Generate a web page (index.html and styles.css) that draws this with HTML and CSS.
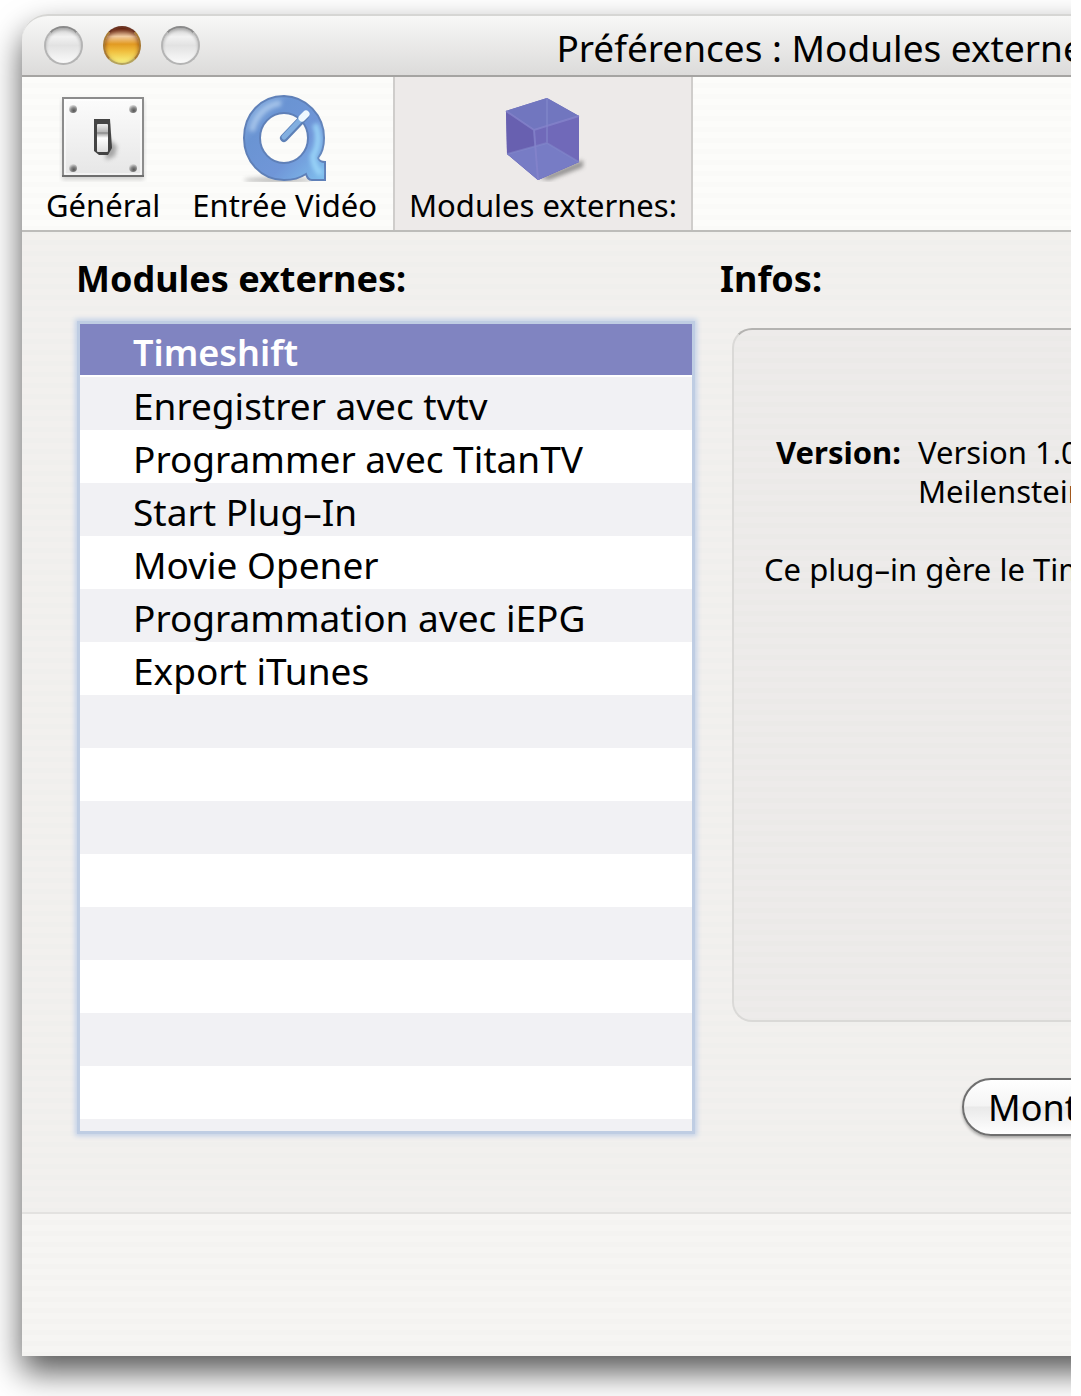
FILE: index.html
```html
<!DOCTYPE html>
<html lang="fr">
<head>
    <meta charset="UTF-8">
    <meta name="viewport" content="width=device-width, initial-scale=1.0">
    <title>Préférences : Modules externes</title>
    <link rel="stylesheet" href="styles.css">
</head>
<body>
    <div class="stage">
        <main class="window">
            <header class="titlebar">
                <div class="lights">
                    <button class="light" aria-label="Fermer"></button>
                    <button class="light amber" aria-label="Réduire"></button>
                    <button class="light" aria-label="Agrandir"></button>
                </div>
                <h1>Préférences : Modules externes</h1>
            </header>

            <nav class="toolbar">
                <button class="tool">
                    <svg width="88" height="88" viewBox="0 0 88 88" aria-hidden="true">
                        <defs>
                            <linearGradient id="plate" x1="0" y1="0" x2="0" y2="1">
                                <stop offset="0" stop-color="#fcfcfc"/>
                                <stop offset="1" stop-color="#e6e6e6"/>
                            </linearGradient>
                            <linearGradient id="lever" x1="0" y1="0" x2="0" y2="1">
                                <stop offset="0" stop-color="#eee"/>
                                <stop offset=".35" stop-color="#aaa"/>
                                <stop offset=".5" stop-color="#fff"/>
                                <stop offset="1" stop-color="#ddd"/>
                            </linearGradient>
                            <radialGradient id="screw" cx=".6" cy=".7" r=".7">
                                <stop offset="0" stop-color="#555"/>
                                <stop offset=".5" stop-color="#888"/>
                                <stop offset="1" stop-color="#ddd"/>
                            </radialGradient>
                            <filter id="soft" x="-50%" y="-50%" width="200%" height="200%">
                                <feGaussianBlur stdDeviation="2"/>
                            </filter>
                        </defs>
                        <rect x="3" y="6" width="82" height="80" fill="#999" opacity=".4" filter="url(#soft)"/>
                        <rect x="4" y="4" width="80" height="78" fill="url(#plate)" stroke="#8c8c8c" stroke-width="2"/>
                        <path d="M3 82H85" stroke="#6e6e6e" stroke-width="2"/>
                        <rect x="6" y="6" width="76" height="74" fill="none" stroke="#fff"/>
                        <circle cx="14" cy="15" r="4" fill="url(#screw)"/>
                        <circle cx="74" cy="15" r="4" fill="url(#screw)"/>
                        <circle cx="14" cy="74" r="4" fill="url(#screw)"/>
                        <circle cx="74" cy="74" r="4" fill="url(#screw)"/>
                        <path d="M46 42L58 52L56 62L47 66Z" fill="#777" opacity=".6" filter="url(#soft)"/>
                        <path d="M35 25H51L53 54L49 61H40L35 57Z" fill="#444"/>
                        <rect x="38" y="30" width="11" height="28" rx="1" fill="url(#lever)"/>
                        <path d="M38 39H49" stroke="#999" stroke-width="2"/>
                    </svg>
                    <span>Général</span>
                </button>
                <button class="tool">
                    <svg width="88" height="88" viewBox="0 0 88 88" aria-hidden="true">
                        <defs>
                            <linearGradient id="ring" x1="0" y1="0" x2="1" y2="1">
                                <stop offset="0" stop-color="#8fb5e2"/>
                                <stop offset=".3" stop-color="#6a94d3"/>
                                <stop offset=".65" stop-color="#7096d8"/>
                                <stop offset="1" stop-color="#7fc0ee"/>
                            </linearGradient>
                        </defs>
                        <ellipse cx="37" cy="86" rx="34" ry="3" fill="#777" opacity=".45" filter="url(#soft)"/>
                        <path fill-rule="evenodd" fill="url(#ring)" stroke="#5f80b8" stroke-width="2" d="M43 2A41 42 0 0 1 83 44C83 53 81 59 77 64C78 67 80 68 84 68V86H71C67 86 66 83 65 80C59 84 51 86 43 86C20 86 3 67 3 44C3 20 20 2 43 2ZM43 19A24 25 0 1 0 43 69A24 25 0 1 0 43 19Z"/>
                        <g filter="url(#soft)">
                            <path d="M11 37A33 34 0 0 1 40 9" fill="none" stroke="#b2cdef" stroke-width="6" opacity=".8"/>
                            <path d="M74 30Q81 47 72 62Q72 72 80 80" fill="none" stroke="#9bd7fa" stroke-width="6" opacity=".9"/>
                        </g>
                        <path d="M43 44L64 22" stroke="#5d80b7" stroke-width="8" stroke-linecap="round"/>
                        <path d="M43 43L64 21" stroke="#82afe0" stroke-width="5" stroke-linecap="round"/>
                        <path d="M61 24L65 20" stroke="#eef8ff" stroke-width="7" stroke-linecap="round"/>
                    </svg>
                    <span>Entrée Vidéo</span>
                </button>
                <button class="tool selected" aria-pressed="true">
                    <svg width="88" height="88" viewBox="0 0 88 88" aria-hidden="true">
                        <path d="M40 84L84 66V73L50 86Z" fill="#555" opacity=".6" filter="url(#soft)"/>
                        <path d="M7 17L48 4L80 22V68L39 86L8 60Z" fill="#6c69b8"/>
                        <path d="M7 17L48 4L80 22L35 36Z" fill="#7176bf"/>
                        <path d="M7 17L35 36L39 86L8 60Z" fill="#6860b0"/>
                        <path d="M35 36L80 22V68L39 86Z" fill="#7069b9"/>
                        <path d="M8 60L48 49L80 68L39 86Z" fill="#777cc5"/>
                        <path d="M48 4V49L80 68M48 49L8 60" fill="none" stroke="#858bce" stroke-width="2" opacity=".5"/>
                        <path d="M7 17L35 36L80 22M35 36L39 86" fill="none" stroke="#8583cb" stroke-width="2" opacity=".8"/>
                    </svg>
                    <span>Modules externes:</span>
                </button>
            </nav>

            <div class="content">
                <section class="modules">
                    <h2 id="modulesTitle">Modules externes:</h2>
                    <ul class="module-list" role="listbox" aria-labelledby="modulesTitle" tabindex="0">
                        <li role="option" aria-selected="true">Timeshift</li>
                        <li role="option">Enregistrer avec tvtv</li>
                        <li role="option">Programmer avec TitanTV</li>
                        <li role="option">Start Plug–In</li>
                        <li role="option">Movie Opener</li>
                        <li role="option">Programmation avec iEPG</li>
                        <li role="option">Export iTunes</li>
                    </ul>
                </section>

                <section class="infos">
                    <h2>Infos:</h2>
                    <div class="info-box">
                        <dl>
                            <dt>Version:</dt>
                            <dd>Version 1.0<br>Meilenstein</dd>
                        </dl>
                        <p>Ce plug–in gère le Timeshift</p>
                    </div>
                    <button class="push">Montrer</button>
                </section>
            </div>

            <footer class="bottom"></footer>
        </main>
    </div>
</body>
</html>
```
FILE: styles.css
```css
* {
    box-sizing: border-box;
}

body {
    margin: 0;
    background: #fff;
    color: #000;
    font-family: "Noto Sans", "Open Sans", sans-serif;
    font-size: 37px;
    line-height: 53px;
}

h1, h2, p, ul, dl, dd {
    margin: 0;
    padding: 0;
}

h1 {
    font-size: 37px;
}

h2 {
    padding-left: 2px;
    font-size: 36px;
}

button {
    font-family: inherit;
    color: inherit;
    padding: 0;
    border: none;
    background: none;
}

/* the window runs past the right edge of the stage */
.stage {
    margin-right: 10px;
    padding: 14px 0 40px 22px;
    overflow: hidden;
}

.window {
    width: 155%;
    border-radius: 26px 26px 0 0;
    background: repeating-linear-gradient(#f2f0ee 0 6px, #f0efed 6px 11px);
    box-shadow: 0 16px 32px rgba(0, 0, 0, 0.66);
}

/* title bar */
.titlebar {
    display: flex;
    align-items: center;
    height: 63px;
    padding: 0 22px;
    border-top: 2px solid #d6d6d4;
    border-bottom: 2px solid #a5a4a2;
    border-radius: 26px 26px 0 0;
    background: linear-gradient(#f8f8f7, #efefee 30%, #dcdbda);
}

.titlebar h1 {
    flex: 1;
    margin-right: 168px;
    padding-top: 4px;
    font-weight: 400;
    text-align: center;
    white-space: nowrap;
}

.lights {
    display: flex;
    gap: 20px;
    width: 156px;
}

.light {
    width: 39px;
    height: 39px;
    border: 2px solid #b4b4b4;
    border-top-color: #8a8a8a;
    border-radius: 50%;
    background: linear-gradient(#d0d0d0, #f2f2f2 25%, #e2e2e2 50%, #fafafa);
    box-shadow: inset 0 2px 3px rgba(0, 0, 0, 0.2);
}

.light.amber {
    border-color: #6b3220 #a87a34 #b5a35c;
    background: linear-gradient(#6e2c18, #f1cba0 24%, #e29a22 46%, #f1c141 68%, #f8f482);
    box-shadow: inset 0 2px 4px rgba(90, 20, 0, 0.6);
}

/* toolbar */
.toolbar {
    display: flex;
    padding-left: 8px;
    height: 155px;
    border-bottom: 2px solid #bdbcba;
    background: repeating-linear-gradient(#fcfcfa 0 6px, #fafaf8 6px 11px);
}

.tool {
    display: flex;
    flex-direction: column;
    align-items: center;
    padding: 17px 14px 0;
    border: solid transparent;
    border-width: 0 2px;
    font-size: 31px;
    line-height: 46px;
    white-space: nowrap;
}

.tool svg {
    display: block;
}

.tool.selected {
    border-color: #cfcdcb;
    background: #edeae9;
}

/* content */
.content {
    display: flex;
    gap: 20px;
    height: 982px;
    padding: 20px 52px 0;
    border-bottom: 2px solid #e3e2e0;
}

.modules {
    flex: 0 0 624px;
}

.module-list {
    height: 807px;
    margin: 19px 6px 0;
    list-style: none;
    background: repeating-linear-gradient(#fff 0 53px, #f1f1f4 53px 106px);
    box-shadow: 0 0 0 3px #bfcde3, 0 0 5px 5px #c3d1e8;
    outline: none;
}

.module-list li {
    height: 53px;
    padding-left: 53px;
    line-height: 58px;
}

.module-list li[aria-selected="true"] {
    border-bottom: 2px solid #fff;
    background: #8084c1;
    color: #fff;
    font-size: 36px;
    font-weight: 600;
}

.infos {
    flex: 1;
}

.info-box {
    height: 694px;
    margin: 23px 0 0 14px;
    padding: 103px 30px 0;
    border: 2px solid #dad9d7;
    border-top-color: #b4b3b1;
    border-radius: 20px;
    background: repeating-linear-gradient(#edebea 0 6px, #ebeae8 6px 11px);
    font-size: 31px;
    line-height: 39px;
}

.info-box dl {
    display: flex;
    gap: 17px;
    padding-left: 12px;
    margin-bottom: 39px;
}

.info-box dt {
    font-weight: 700;
}

.push {
    display: block;
    height: 58px;
    margin: 56px 0 0 244px;
    padding: 0 24px;
    border: 2px solid #6f6f6f;
    border-radius: 29px;
    background: linear-gradient(#fff, #f4f4f4 48%, #e9e9e9 50%, #fff);
    box-shadow: 0 2px 3px rgba(0, 0, 0, 0.3);
    font-size: 36px;
    line-height: 53px;
}

/* bottom strip */
.bottom {
    height: 142px;
    background: repeating-linear-gradient(#f6f5f3 0 6px, #f4f3f1 6px 11px);
}
```
